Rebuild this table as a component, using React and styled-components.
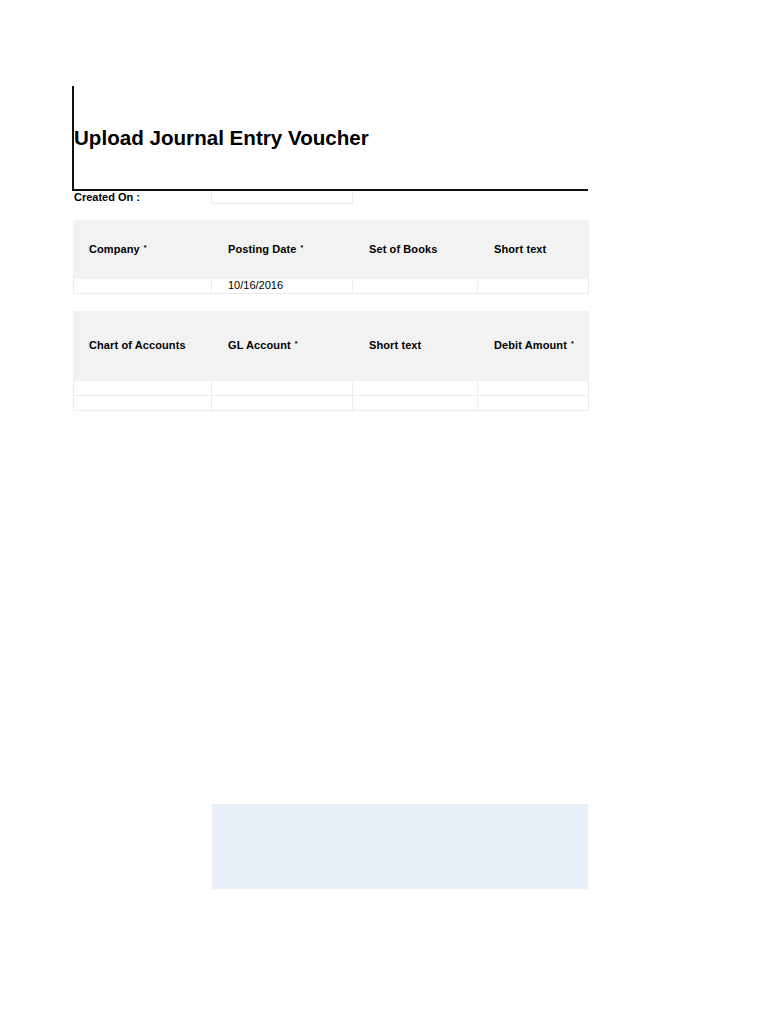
import React from 'react'
import styled, { createGlobalStyle } from 'styled-components'

const GlobalStyle = createGlobalStyle`
    body {
        margin: 0;
        background: #fff;
        font-family: "Liberation Sans", Arial, sans-serif;
        color: #000;
    }
`

const cols = '139px 141px 125px 111px'

const Page = styled.div`
    width: 516px;
    padding: 86px 0 0 72px;
`

const TitleBlock = styled.div`
    border-left: 2px solid #111;
    border-bottom: 2px solid #111;
    padding: 40px 0 40px 0;
    height: 23px;
`

const Title = styled.h1`
    margin: 0;
    font-size: 20.6px;
    line-height: 23px;
    font-weight: bold;
`

const CreatedRow = styled.div`
    display: grid;
    grid-template-columns: 139px 142px;
    height: 13px;
`

const CreatedLabel = styled.span`
    font-size: 11px;
    font-weight: bold;
    line-height: 12px;
    padding-left: 2px;
`

const InputBox = styled.div`
    border: 1px solid #ececec;
    border-top: none;
`

const Table = styled.div`
    margin-top: ${p => p.$top}px;
    margin-left: 1px;
    width: 516px;
`

const HeadRow = styled.div`
    display: grid;
    grid-template-columns: ${cols};
    height: ${p => p.$height}px;
    background: #f2f2f2;
    align-items: center;
`

const HeadCell = styled.div`
    font-size: 11px;
    font-weight: bold;
    letter-spacing: 0.1px;
    line-height: 13px;
    padding: 0 0 1px 16px;
    white-space: nowrap;
`

const Req = styled.span`
    font-size: 7px;
    line-height: 0;
    vertical-align: 3px;
    margin-left: 4px;
`

const BodyRow = styled.div`
    display: grid;
    grid-template-columns: ${cols};
    height: 14px;
    border-bottom: 1px solid #ececec;
`

const BodyCell = styled.div`
    border-right: 1px solid #ececec;
    font-size: 11px;
    line-height: 12px;
    padding-left: 16px;
    &:first-child {
        border-left: 1px solid #ececec;
    }
`

const Note = styled.div`
    margin: 393px 0 0 140px;
    width: 376px;
    height: 85px;
    background: #e8eff6;
`

const Head = ({ label, req }) => <HeadCell>
    {label}{req && <Req>*</Req>}
</HeadCell>

const App = () => {
    return <>
        <GlobalStyle />
        <Page>
            <TitleBlock>
                <Title>Upload Journal Entry Voucher</Title>
            </TitleBlock>
            <CreatedRow>
                <CreatedLabel>Created On :</CreatedLabel>
                <InputBox />
            </CreatedRow>

            <Table $top={16}>
                <HeadRow $height={59}>
                    <Head label="Company" req />
                    <Head label="Posting Date" req />
                    <Head label="Set of Books" />
                    <Head label="Short text" />
                </HeadRow>
                <BodyRow>
                    <BodyCell />
                    <BodyCell>10/16/2016</BodyCell>
                    <BodyCell />
                    <BodyCell />
                </BodyRow>
            </Table>

            <Table $top={17}>
                <HeadRow $height={70}>
                    <Head label="Chart of Accounts" />
                    <Head label="GL Account" req />
                    <Head label="Short text" />
                    <Head label="Debit Amount" req />
                </HeadRow>
                <BodyRow>
                    <BodyCell />
                    <BodyCell />
                    <BodyCell />
                    <BodyCell />
                </BodyRow>
                <BodyRow>
                    <BodyCell />
                    <BodyCell />
                    <BodyCell />
                    <BodyCell />
                </BodyRow>
            </Table>

            <Note />
        </Page>
    </>
}

export default App
